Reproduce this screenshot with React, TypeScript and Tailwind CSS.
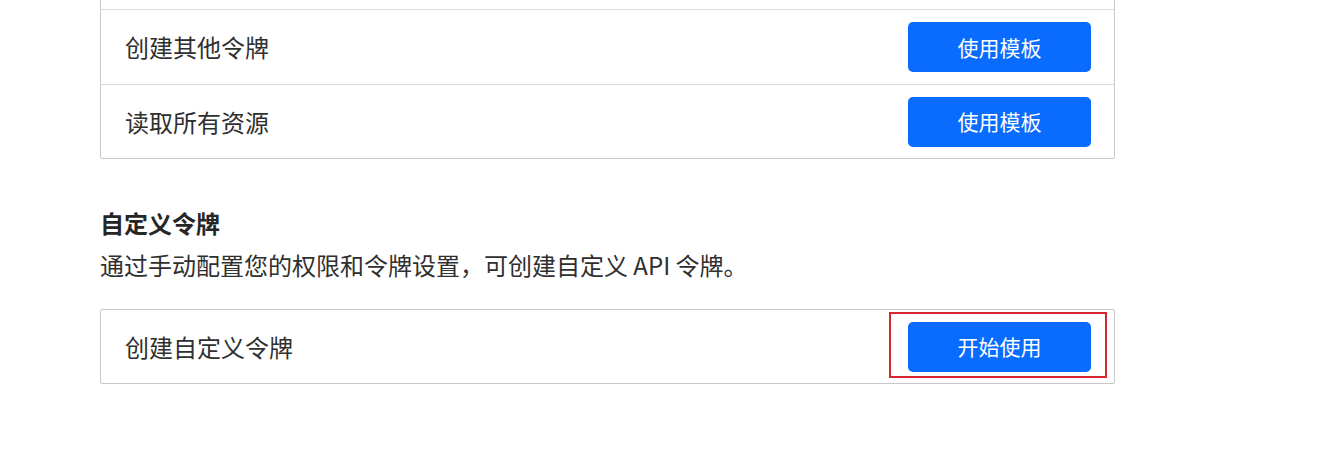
import React from "react";

const rows = [
  { t: "编辑区域 DNS", h: "h-[74px]" },
  { t: "创建其他令牌", h: "h-[75px]" },
  { t: "读取所有资源", h: "h-[73px]" },
];

function Btn({ label }: { label: string }) {
  return (
    <button className="w-[183px] h-[50px] rounded-[5px] bg-[#0a6cff] text-white text-[21px] leading-none flex items-center justify-center">
      {label}
    </button>
  );
}

export default function App() {
  return (
    <div
      className="w-[1334px] h-[474px] overflow-hidden bg-white text-[#2f2f2f]"
      style={{ fontFamily: '"Noto Sans CJK SC", "Noto Sans", sans-serif' }}
    >
      <div className="ml-[100px] w-[1015px] mt-[-65px]">
        <div className="border border-[#c8c8c8] rounded-[2px] divide-y divide-[#dcdcdc]">
          {rows.map((r) => (
            <div key={r.t} className={`${r.h} flex items-center justify-between pl-[24px] pr-[23px]`}>
              <span className="text-[24px] leading-[36px]">{r.t}</span>
              <Btn label="使用模板" />
            </div>
          ))}
        </div>

        <h2 className="mt-[46px] text-[24px] leading-[36px] font-bold text-[#262626]">自定义令牌</h2>
        <p className="mt-[6px] text-[24px] leading-[36px]">
          通过手动配置您的权限和令牌设置，可创建自定义 API 令牌。
        </p>

        <div className="mt-[26px] border border-[#c8c8c8] rounded-[2px]">
          <div className="h-[73px] flex items-center justify-between pl-[24px] pr-[23px]">
            <span className="text-[24px] leading-[36px]">创建自定义令牌</span>
            <div className="relative">
              <Btn label="开始使用" />
              <div className="absolute left-[-19px] top-[-10px] w-[218px] h-[66px] border-2 border-[#d7262d]" />
            </div>
          </div>
        </div>
      </div>
    </div>
  );
}
